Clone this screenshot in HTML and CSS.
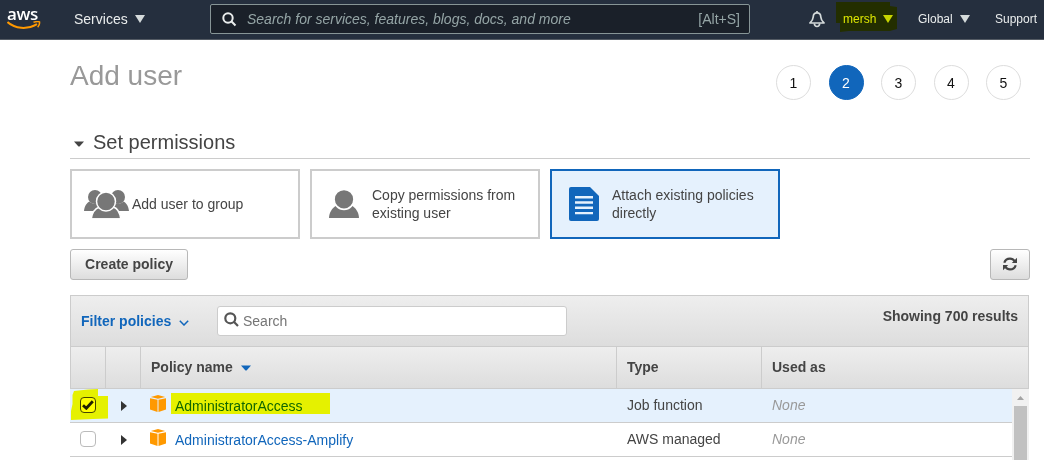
FILE: index.html
```html
<!DOCTYPE html>
<html lang="en">
<head>
<meta charset="utf-8">
<title>Add user</title>
<link rel="stylesheet" href="styles.css">
</head>
<body>
<header class="topbar">
  <div class="logo">
    <span class="logo-text">aws</span>
    <svg class="logo-smile" width="34" height="9" viewBox="0 0 34 9"><path d="M.5 1C8 7.800 20 9 30 3.200" fill="none" stroke="#f90" stroke-width="2"/><path d="M26.500 1.300c2.500-.8 4.500-.9 6-.4.300 1.800-.3 3.700-1.800 5.300" fill="none" stroke="#f90" stroke-width="1.500"/></svg>
  </div>
  <div class="nav-item services">Services <i class="caret"></i></div>
  <div class="global-search">
    <svg width="15" height="15" viewBox="0 0 15 15" fill="none" stroke="#eaeded" stroke-width="2"><circle cx="6" cy="6" r="4.700"/><path d="M9.300 9.300L13.500 13.500"/></svg>
    <span class="placeholder">Search for services, features, blogs, docs, and more</span>
    <span class="shortcut">[Alt+S]</span>
  </div>
  <svg class="bell" width="16" height="17" viewBox="0 0 16 17" fill="none" stroke="#d5dbdb" stroke-width="1.700"><path d="M1 12C3 10.200 4 8.500 4.200 6 4.300 3.500 5.800 1.900 8 1.900s3.700 1.600 3.800 4.100C12 8.500 13 10.200 15 12z" stroke-linejoin="round"/><path d="M8 0v2M5.300 12.500c.2 2 1.200 3 2.700 3s2.500-1 2.700-3"/></svg>
  <div class="nav-item account">mersh <i class="caret"></i>
    <svg class="marker marker-account" width="61" height="31" viewBox="0 0 61 31"><path d="M0 0H54V4L61 5V27L54 29H13L4 30V21H0Z" fill="#f0f800"/></svg>
  </div>
  <div class="nav-item region">Global <i class="caret"></i></div>
  <div class="nav-item support">Support</div>
</header>

<main class="page">
  <div class="title-row">
    <h1>Add user</h1>
    <ol class="steps">
      <li>1</li><li class="current">2</li><li>3</li><li>4</li><li>5</li>
    </ol>
  </div>

  <h2><svg width="10" height="6" viewBox="0 0 10 6"><path d="M0 .5H10L6 5Q5 6 4 5Z" fill="#444"/></svg>Set permissions</h2>

  <div class="cards">
    <div class="card">
      <div class="card-icon group">
        <svg width="46" height="30" viewBox="0 0 46 30" fill="#777"><circle cx="11" cy="8" r="7"/><path d="M0 22C.5 17 3 13.500 5.500 12.500c3 3.300 8 3.300 11 0L19 22z"/><circle cx="34" cy="8" r="7"/><path d="M45 22C44.500 17 42 13.500 39.500 12.500c-3 3.300-8 3.300-11 0L26 22z"/><path d="M7.200 30C8 24 11 19.500 15.500 18h14C34 19.500 36 24 36.800 30z" stroke="#fff" stroke-width="1.500"/><circle cx="22" cy="12.500" r="9.500" stroke="#fff" stroke-width="1.500"/><path d="M5 29.200H40V31H5Z" fill="#fff"/></svg>
      </div>
      <span>Add user to group</span>
    </div>
    <div class="card">
      <div class="card-icon">
        <svg width="30" height="28" viewBox="0 0 30 28" fill="#777"><path d="M0 28C.2 22.500 3 18 7.500 15.500h15C27 18 29.800 22.500 30 28z"/><circle cx="15" cy="9.300" r="10" stroke="#fff" stroke-width="1.700"/></svg>
      </div>
      <span>Copy permissions from existing user</span>
    </div>
    <div class="card selected">
      <div class="card-icon">
        <svg width="30" height="34" viewBox="0 0 30 34"><path d="M2 0H21L30 9V32Q30 34 28 34H2Q0 34 0 32V2Q0 0 2 0Z" fill="#1166bb"/><path d="M6 10.200H24M6 15.500H24M6 20.800H24M6 26.100H24" stroke="#e5f1fd" stroke-width="2.400"/></svg>
      </div>
      <span>Attach existing policies directly</span>
    </div>
  </div>

  <div class="actions">
    <button class="btn create">Create policy</button>
    <button class="btn refresh" aria-label="Refresh">
      <svg width="14" height="14" viewBox="0 0 14 14" fill="none" stroke="#444" stroke-width="2.200"><path d="M1.300 5.800C2.100 3 4.300 1.600 7 1.600c2 0 3.500.8 4.600 2.500M12.700 8.200C11.900 11 9.700 12.400 7 12.400c-2 0-3.500-.8-4.600-2.500"/><path d="M14 .8V6H8.800ZM0 13.200V8H5.200Z" fill="#444" stroke="none"/></svg>
    </button>
  </div>

  <section class="table">
    <div class="toolbar">
      <span class="filter">Filter policies <svg width="10" height="6" viewBox="0 0 10 6" fill="none" stroke="#1166bb" stroke-width="1.500"><path d="M.8.8L5 5 9.200.8"/></svg></span>
      <div class="search">
        <svg width="15" height="15" viewBox="0 0 15 15" fill="none" stroke="#555" stroke-width="2.200"><circle cx="6.300" cy="6.300" r="5"/><path d="M9.800 9.800L14 14"/></svg>
        <span>Search</span>
      </div>
      <strong class="count">Showing 700 results</strong>
    </div>
    <div class="row head">
      <div></div><div></div>
      <div>Policy name <svg class="sort" width="10" height="6" viewBox="0 0 10 6"><path d="M0 .5H10L6 5Q5 6 4 5Z" fill="#1166bb"/></svg></div>
      <div>Type</div>
      <div>Used as</div>
    </div>
    <div class="body">
      <div class="rows">
        <div class="row checked">
          <div class="select"><i class="checkbox"><svg width="12" height="10" viewBox="0 0 12 10"><path d="M1 5.300L4.300 8.300 10.800 1.300" fill="none" stroke="#222" stroke-width="2.800"/></svg></i>
            <svg class="marker marker-check" width="37" height="31" viewBox="0 0 37 31"><path d="M1.500 6L3 2 17 .5 27 0V7H37V29.500L22 30 0 31V22L1.500 15Z" fill="#ff0"/></svg>
          </div>
          <div class="expand"><i></i></div>
          <div class="name">
            <svg class="cube" width="16" height="17" viewBox="0 0 16 17"><path d="M0 3.200L7.500 4.800V17L0 14.500ZM16 3.200L8.500 4.800V17L16 14.500ZM.8 2L8 0 15.200 2 8 3.700Z" fill="#ff9900"/></svg>
            <a>AdministratorAccess</a><i class="marker marker-name"></i>
          </div>
          <div>Job function</div>
          <div class="none">None</div>
        </div>
        <div class="row">
          <div class="select"><i class="checkbox"></i></div>
          <div class="expand"><i></i></div>
          <div class="name">
            <svg class="cube" width="16" height="17" viewBox="0 0 16 17"><path d="M0 3.200L7.500 4.800V17L0 14.500ZM16 3.200L8.500 4.800V17L16 14.500ZM.8 2L8 0 15.200 2 8 3.700Z" fill="#ff9900"/></svg>
            <a>AdministratorAccess-Amplify</a>
          </div>
          <div>AWS managed</div>
          <div class="none">None</div>
        </div>
      </div>
      <div class="scrollbar"><svg class="up" width="7" height="4" viewBox="0 0 7 4"><path d="M0 4L3.500 0 7 4Z" fill="#a3a3a3"/></svg><i class="thumb"></i></div>
    </div>
  </section>
</main>
</body>
</html>
```
FILE: styles.css
```css
* { box-sizing: border-box; }
html, body { height: 100%; }
body {
  margin: 0;
  overflow: hidden;
  background: #fff;
  color: #444;
  font: 14px/18px "Liberation Sans", Arial, sans-serif;
}
svg { display: block; flex: none; }

.topbar {
  display: flex;
  height: 40px;
  padding-left: 7px;
  background: #252f3e;
  border-bottom: 1px solid #545b64;
  color: #eaeded;
}
.logo { width: 67px; padding-top: 4px; }
.logo-text {
  display: block;
  height: 17px;
  font: 600 17px/20px "Open Sans", sans-serif;
  letter-spacing: -0.3px;
  color: #fff;
}
.logo-smile { margin-top: 0; }
.nav-item {
  display: flex;
  align-items: center;
  height: 38px;
  white-space: nowrap;
}
.nav-item .caret {
  margin-left: 7px;
  border: 5px solid transparent;
  border-top: 8px solid #d5dbdb;
  border-bottom: 0;
}
.services { width: 136px; }
.global-search {
  display: flex;
  align-items: center;
  width: 540px;
  height: 30px;
  margin-top: 4px;
  padding: 0 9px 0 11px;
  background: #1a2029;
  border: 1px solid #879596;
  border-radius: 2px;
  color: #95a5a6;
}
.placeholder { flex: 1; margin-left: 10px; font-style: italic; }
.bell { margin: 11px 18px 0 59px; }
.account, .region, .support { font-size: 12px; }
.account { position: relative; width: 75px; }
.region { width: 77px; }
.marker { position: absolute; mix-blend-mode: multiply; }
.marker-account { left: -7px; top: 2px; }

.page { width: 960px; margin-left: 70px; }
.title-row { display: flex; justify-content: space-between; height: 86px; }
h1 { margin: 19px 0 0; font-size: 28px; line-height: 34px; font-weight: 400; color: #999; }
.steps { display: flex; gap: 17.5px; margin: 25px 9px 0 0; padding: 0; list-style: none; }
.steps li {
  width: 35px;
  height: 35px;
  border: 1px solid #ddd;
  border-radius: 50%;
  line-height: 35px;
  text-align: center;
  color: #111;
}
.steps .current { background: #1166bb; border-color: #1166bb; color: #fff; }

h2 {
  display: flex;
  align-items: center;
  gap: 9px;
  height: 33px;
  margin: 0;
  padding-left: 4px;
  border-bottom: 1px solid #ccc;
  font-size: 20px;
  font-weight: 400;
}
h2 svg { margin-top: 4px; }

.cards { display: flex; gap: 10px; margin-top: 10px; }
.card {
  display: flex;
  align-items: center;
  width: 230px;
  height: 70px;
  padding: 0 20px 0 10px;
  border: 2px solid #ccc;
}
.card.selected { background: #e5f1fd; border-color: #1166bb; }
.card-icon { display: flex; justify-content: center; flex: none; width: 44px; margin-right: 6px; }
.card-icon.group { justify-content: flex-start; padding-left: 2px; }

.actions { display: flex; justify-content: space-between; margin-top: 10px; }
.btn {
  display: flex;
  align-items: center;
  justify-content: center;
  height: 31px;
  padding: 0 0 2px;
  background: linear-gradient(#fff, #ddd);
  border: 1px solid #b8b8b8;
  border-radius: 3px;
  font: bold 14px "Liberation Sans", Arial, sans-serif;
  color: #444;
}
.create { width: 118px; }
.refresh { width: 40px; }

.table { width: 959px; margin-top: 15px; }
.toolbar {
  display: flex;
  height: 51px;
  padding: 10px 10px 0;
  background: linear-gradient(#eee, #ddd);
  border: 1px solid #ccc;
  border-bottom: 0;
}
.filter {
  display: flex;
  align-items: center;
  gap: 8px;
  width: 136px;
  height: 30px;
  font-weight: bold;
  color: #1166bb;
}
.filter svg { margin-top: 3px; }
.search {
  display: flex;
  gap: 4px;
  width: 350px;
  height: 30px;
  padding: 5px 6px;
  background: #fff;
  border: 1px solid #ccc;
  border-radius: 3px;
  color: #757575;
}
.count { margin: 1px 0 0 auto; }

.row {
  display: grid;
  grid-template-columns: 35px 35px 476px 145px 1fr;
  align-items: center;
  height: 34px;
  padding-left: 1px;
  border-bottom: 1px solid #ccc;
}
.row > div { padding-left: 10px; }
.row.head {
  height: 43px;
  background: linear-gradient(#eee, #ddd);
  border: 1px solid #ccc;
  padding: 0;
  font-weight: bold;
}
.head > div { display: flex; align-items: center; gap: 8px; height: 100%; padding-bottom: 2px; border-right: 1px solid #ccc; }
.head > div:last-child { border: 0; }
.head .sort { margin-top: 3px; }
.rows .row > div { margin-top: -1px; }
.checked { background: #e5f1fd; }
.body { display: flex; height: 80px; }
.rows { flex: 1; }
.row > .select { position: relative; padding-left: 9px; }
.checkbox {
  display: flex;
  align-items: center;
  justify-content: center;
  width: 16px;
  height: 16px;
  background: #fff;
  border: 1px solid #bbb;
  border-radius: 4px;
}
.checked .checkbox { border: 1.5px solid #444; }
.marker-check { left: 0; top: -8px; }
.row > .expand { padding-left: 15px; }
.expand i { display: block; width: 0; border: 5px solid transparent; border-left: 6px solid #333; border-right: 0; margin-top: 1px; }
.row > .name { position: relative; display: flex; align-items: center; gap: 9px; padding-left: 9px; }
.name .cube { margin-top: -3px; }
.name a { color: #1166bb; margin-top: 1px; }
.marker-name { left: 30px; top: -3px; width: 159px; height: 21px; background: #ff0; }
.row > .none { color: #999; font-style: italic; }
.scrollbar { width: 17px; padding: 7px 2px 0; background: #f1f1f1; }
.up { margin: 0 auto 6px; }
.thumb { display: block; height: 60px; background: #c1c1c1; }
```
